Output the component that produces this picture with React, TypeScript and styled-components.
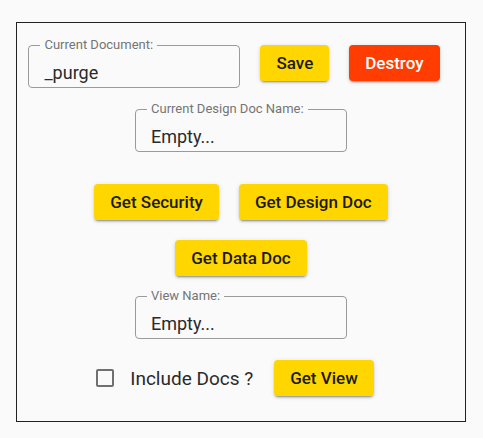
import React, { useState } from 'react'
import styled, { createGlobalStyle } from 'styled-components'

const GlobalStyle = createGlobalStyle`
  body {
    margin: 0;
    background: #fafafa;
    font-family: Roboto, "Liberation Sans", sans-serif;
  }
`

const Page = styled.div`
  padding: 22px 0 0 16px;
`

const Panel = styled.div`
  box-sizing: border-box;
  width: 450px;
  height: 400px;
  border: 1px solid #222;
  display: flex;
  flex-direction: column;
  align-items: center;
`

const Row = styled.div<{ $mt: number; $gap?: number; $shift?: number }>`
  display: flex;
  align-items: center;
  justify-content: center;
  gap: ${({ $gap }) => $gap ?? 20}px;
  margin-top: ${({ $mt }) => $mt}px;
  margin-left: ${({ $shift }) => $shift ?? 0}px;
`

const Field = styled.fieldset`
  box-sizing: border-box;
  width: 212px;
  margin: 0;
  padding: 0 15px 4px 11px;
  border: 1px solid #9a9a9a;
  border-radius: 4px;
`

const Legend = styled.legend`
  padding: 0 4px;
  font-size: 13px;
  line-height: 14px;
  color: #757575;
`

const Value = styled.div`
  margin-top: 10px;
  padding-left: 4px;
  font-size: 18px;
  line-height: 21px;
  color: #2a2a2a;
`

const Button = styled.button<{ $danger?: boolean }>`
  height: 36px;
  padding: 0 16px;
  border: none;
  border-radius: 4px;
  background: ${({ $danger }) => ($danger ? '#ff3d00' : '#ffd600')};
  color: ${({ $danger }) => ($danger ? '#ffffff' : '#1a1a1a')};
  font-family: inherit;
  font-size: 17px;
  font-weight: 500;
  box-shadow: 0 3px 1px -2px rgba(0, 0, 0, 0.2), 0 2px 2px 0 rgba(0, 0, 0, 0.14),
    0 1px 5px 0 rgba(0, 0, 0, 0.12);
  cursor: pointer;
`

const CheckLabel = styled.label`
  display: flex;
  align-items: center;
  gap: 16px;
  font-size: 19px;
  color: #2a2a2a;
  cursor: pointer;
`

const Box = styled.span<{ $on: boolean }>`
  box-sizing: border-box;
  width: 18px;
  height: 18px;
  border: 2px solid #707070;
  border-radius: 2px;
  background: ${({ $on }) => ($on ? '#707070' : 'transparent')};
`

const OutlinedField = ({ label, value }: { label: string; value: string }) => (
  <Field>
    <Legend>{label}</Legend>
    <Value>{value}</Value>
  </Field>
)

const App = () => {
  const [includeDocs, setIncludeDocs] = useState(false)

  return (
    <Page>
      <GlobalStyle />
      <Panel>
        <Row $mt={15} $shift={-14}>
          <OutlinedField label="Current Document:" value="_purge" />
          <Button>Save</Button>
          <Button $danger>Destroy</Button>
        </Row>
        <Row $mt={14}>
          <OutlinedField label="Current Design Doc Name:" value="Empty..." />
        </Row>
        <Row $mt={32}>
          <Button>Get Security</Button>
          <Button>Get Design Doc</Button>
        </Row>
        <Row $mt={20}>
          <Button>Get Data Doc</Button>
        </Row>
        <Row $mt={13}>
          <OutlinedField label="View Name:" value="Empty..." />
        </Row>
        <Row $mt={21} $gap={21} $shift={-12}>
          <CheckLabel onClick={() => setIncludeDocs(!includeDocs)}>
            <Box $on={includeDocs} />
            Include Docs ?
          </CheckLabel>
          <Button>Get View</Button>
        </Row>
      </Panel>
    </Page>
  )
}

export default App
